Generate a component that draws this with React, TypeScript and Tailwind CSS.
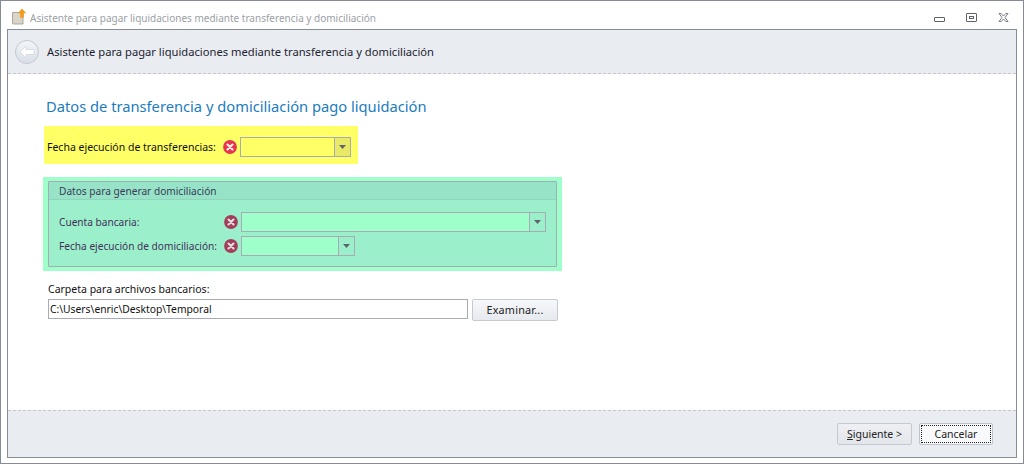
function ErrorIcon({ muted }: { muted?: boolean }) {
  return (
    <svg width="14" height="14" viewBox="0 0 14 14" className="shrink-0">
      <circle cx="7" cy="7" r="6.9" fill={muted ? '#a33d5a' : '#e8344e'} />
      <path d="M4.5 4.5l5 5M9.5 4.5l-5 5" stroke={muted ? '#e4dfe2' : '#fff3e8'} strokeWidth="2.1" strokeLinecap="round" />
    </svg>
  )
}

function Arrow() {
  return (
    <svg width="7" height="4" viewBox="0 0 7 4">
      <path d="M0 0h7L3.5 4z" fill="#5f6470" />
    </svg>
  )
}

function Combo({ className, bg, btn }: { className: string; bg: string; btn: string }) {
  return (
    <div className={`flex h-5 border border-[#a6abb5] ${bg} ${className}`}>
      <div className="flex-1" />
      <div className={`flex w-[16px] items-center justify-center border-l border-[#a6abb5] ${btn}`}>
        <Arrow />
      </div>
    </div>
  )
}

export default function App() {
  return (
    <div className="flex h-[464px] w-[1024px] flex-col overflow-hidden whitespace-nowrap border border-[#868b94] bg-white font-['Noto_Sans',sans-serif] text-[10.5px] leading-[14px] text-[#222]">
      <div className="flex h-[28px] shrink-0 items-center pl-[11px] pr-[14px] pt-[5px]">
        <svg width="15" height="17" viewBox="0 0 15 17" className="mb-[2px] shrink-0">
          <path d="M0.5 4.5h10.5v11.5H1.5a1 1 0 0 1-1-1z" fill="#d9d5c8" stroke="#9a9588" strokeWidth="0.8" />
          <path d="M10 0.5l4.2 4.7h-2.4v4.6H8.2V5.2H5.8z" fill="#f39a1e" />
        </svg>
        <span className="ml-[3px] text-[10px] text-[#9b9fa6]">Asistente para pagar liquidaciones mediante transferencia y domiciliación</span>
        <div className="ml-auto flex items-center gap-[21px]">
          <div className="mt-[3px] h-[5px] w-[11px] rounded-[1px] border border-[#5d626b]" />
          <div className="flex h-[9px] w-[11px] items-center justify-center rounded-[1px] border border-[#5d626b]">
            <div className="h-[3px] w-[5px] border border-[#5d626b]" />
          </div>
          <svg width="11" height="9" viewBox="0 0 11 9">
            <path d="M1 0.5h2.2L5.5 3l2.3-2.5H10L7 4.5l3 4H7.8L5.5 6 3.2 8.5H1l3-4z" fill="#fff" stroke="#5d626b" strokeWidth="0.8" />
          </svg>
        </div>
      </div>

      <div className="mx-[6px] mb-[5px] flex min-h-0 flex-1 flex-col border border-[#868b94]">
        <div className="flex h-[44px] shrink-0 items-center border-b border-dashed border-[#c3c6cc] bg-[#e9ecf1] pl-[7px]">
          <div className="flex h-6 w-6 items-center justify-center rounded-full border border-[#c3c8d1] bg-gradient-to-b from-[#f4f6f9] to-[#d9dee6]">
            <svg width="16" height="14" viewBox="0 0 16 14">
              <path d="M1 7l6-6v3.5h8v5H7V13z" fill="#fff" stroke="#d3d8e0" strokeWidth="0.8" strokeLinejoin="round" />
            </svg>
          </div>
          <span className="ml-[8px] text-[11.2px] text-[#1d2330]">Asistente para pagar liquidaciones mediante transferencia y domiciliación</span>
        </div>

        <div className="flex-1 bg-white pl-[35px] pt-[22px]">
          <h1 className="ml-[3px] text-[14.7px] leading-[20px] text-[#1b7cc0]">Datos de transferencia y domiciliación pago liquidación</h1>

          <div className="ml-px mt-[10px] flex h-[38px] w-[314px] items-center bg-[#ffff66] pl-[3px] pt-[4px]">
            <span className="w-[176px] text-[#111]">Fecha ejecución de transferencias:</span>
            <ErrorIcon />
            <Combo className="ml-[3px] w-[111px]" bg="bg-[#ffff66]" btn="bg-[#e9e968]" />
          </div>

          <div className="mt-[13px] w-[519px] bg-[#9effcb] px-[5px] py-[4px] text-[10.15px]">
            <div className="h-[86px] rounded-[1px] border border-[#a6abb5] bg-[#9bf0cb]">
              <div className="flex h-[18px] items-center border-b border-[#8fd4bb] bg-[#96e3c8] pl-[10px] text-[#3a3a55]">Datos para generar domiciliación</div>
              <div className="mt-[12px] flex items-center pl-[10px] text-[#43305a]">
                <span className="w-[165px]">Cuenta bancaria:</span>
                <ErrorIcon muted />
                <Combo className="ml-[3px] w-[305px]" bg="bg-[#9effcb]" btn="bg-[#9bf0cb]" />
              </div>
              <div className="mt-[4px] flex items-center pl-[10px] text-[#43305a]">
                <span className="w-[165px]">Fecha ejecución de domiciliación:</span>
                <ErrorIcon muted />
                <Combo className="ml-[3px] w-[114px]" bg="bg-[#9effcb]" btn="bg-[#9bf0cb]" />
              </div>
            </div>
          </div>

          <div className="ml-[5px] mt-[11px] text-[#111]">Carpeta para archivos bancarios:</div>
          <div className="ml-[5px] mt-[3px] flex items-start">
            <div className="flex h-5 w-[420px] items-center border border-[#a6abb5] pl-px text-[10.3px] text-[#111]">C:\Users\enric\Desktop\Temporal</div>
            <button className="ml-[4px] h-[22px] w-[86px] rounded-[2px] border border-[#c5c9d0] bg-gradient-to-b from-[#f7f8fa] to-[#e6e9ee] text-[10.8px] tracking-[0.2px] text-[#222]">Examinar...</button>
          </div>
        </div>

        <div className="flex h-[47px] shrink-0 items-center justify-end border-t border-dashed border-[#c3c6cc] bg-[#e9ecf1] pr-[23px]">
          <button className="h-[22px] w-[75px] rounded-[2px] border border-[#c5c9d0] bg-gradient-to-b from-[#eef0f4] to-[#e3e6eb] text-[#222]"><span className="underline">S</span>iguiente &gt;</button>
          <button className="ml-[7px] h-[22px] w-[74px] rounded-[2px] border border-[#bfc3ca] bg-[#f8f9fb] p-px text-[#222]">
            <span className="flex h-full items-center justify-center border border-dotted border-[#222]">Cancelar</span>
          </button>
        </div>
      </div>
    </div>
  )
}
